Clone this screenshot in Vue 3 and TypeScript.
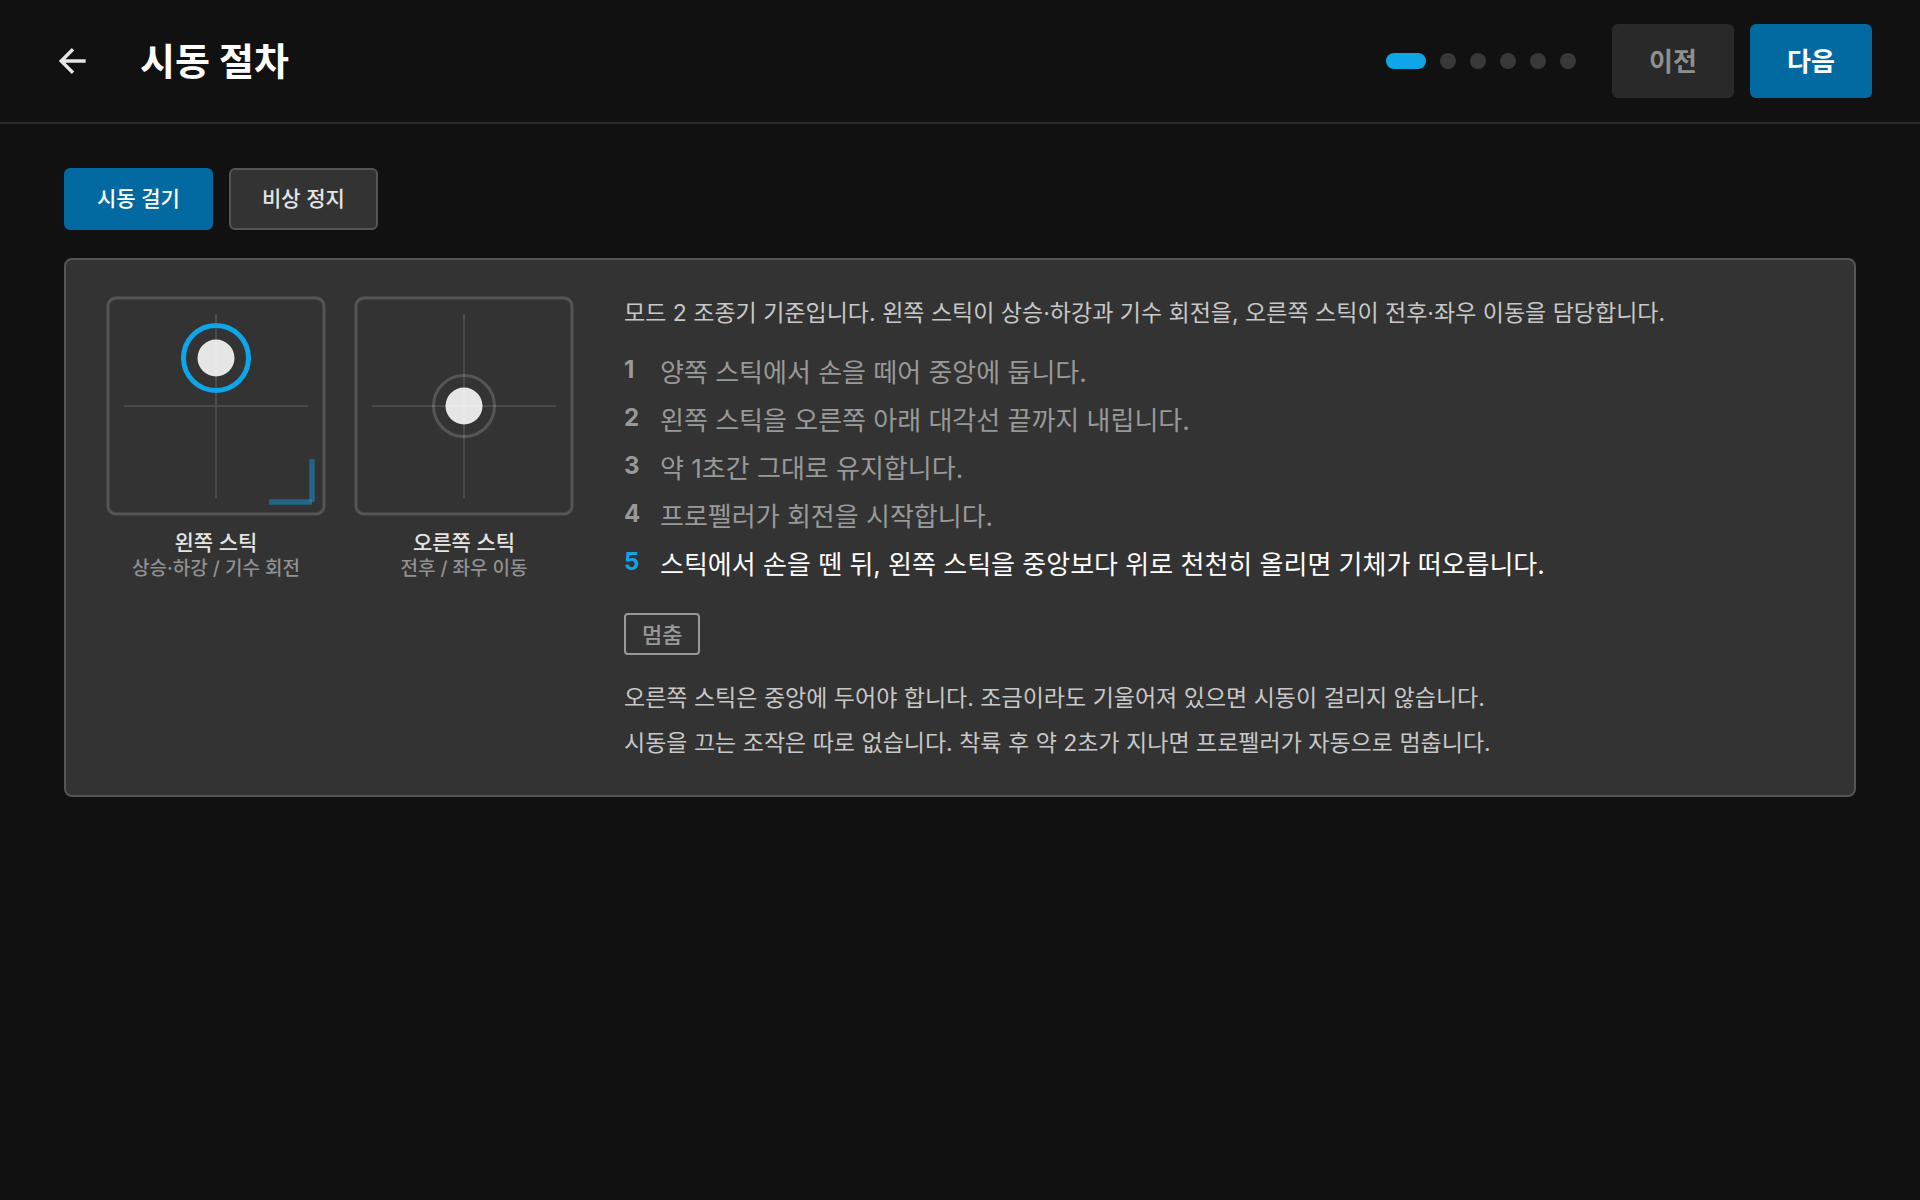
<script setup lang="ts">
import { ref } from 'vue'

interface Stick {
  id: string
  name: string
  role: string
  knobY: number
  active: boolean
}

const tabs = ['시동 걸기', '비상 정지']
const activeTab = ref(0)
const pageCount = 6
const page = ref(0)
const currentStep = 4

const sticks: Stick[] = [
  { id: 'left', name: '왼쪽 스틱', role: '상승·하강 / 기수 회전', knobY: 62, active: true },
  { id: 'right', name: '오른쪽 스틱', role: '전후 / 좌우 이동', knobY: 110, active: false },
]

const steps = [
  '양쪽 스틱에서 손을 떼어 중앙에 둡니다.',
  '왼쪽 스틱을 오른쪽 아래 대각선 끝까지 내립니다.',
  '약 1초간 그대로 유지합니다.',
  '프로펠러가 회전을 시작합니다.',
  '스틱에서 손을 뗀 뒤, 왼쪽 스틱을 중앙보다 위로 천천히 올리면 기체가 떠오릅니다.',
]
</script>

<template>
  <div class="app">
    <header class="topbar">
      <button class="back" type="button" aria-label="뒤로">
        <svg width="40" height="40" viewBox="0 0 40 40" fill="none" stroke="currentColor" stroke-width="3.4">
          <path d="M33.700 20H9M21 8.200L9.200 20L21 31.800" />
        </svg>
      </button>
      <h1>시동 절차</h1>
      <div class="dots">
        <span v-for="n in pageCount" :key="n" class="dot" :class="{ on: n - 1 === page }"></span>
      </div>
      <nav class="pager">
        <button type="button" class="nav-btn" disabled>이전</button>
        <button type="button" class="nav-btn primary">다음</button>
      </nav>
    </header>

    <main>
      <div class="tabs">
        <button
          v-for="(tab, i) in tabs"
          :key="tab"
          type="button"
          class="tab"
          :class="{ on: i === activeTab }"
          @click="activeTab = i"
        >{{ tab }}</button>
      </div>

      <section class="card">
        <div class="sticks">
          <figure v-for="s in sticks" :key="s.id">
            <svg width="220" height="220" viewBox="0 0 220 220" fill="none">
              <rect x="2" y="2" width="216" height="216" rx="8" stroke="#555" stroke-width="3" />
              <path d="M110 18V202M18 110H202" stroke="#4a4a4a" stroke-width="2" />
              <g v-if="s.active" stroke="#0ea5e9" stroke-opacity="0.45" stroke-width="5.500">
                <path d="M206 163V206" />
                <path d="M163 206H206" />
              </g>
              <circle v-if="s.active" cx="110" :cy="s.knobY" r="32.500" stroke="#0ea5e9" stroke-width="5" />
              <circle v-else cx="110" :cy="s.knobY" r="30.500" stroke="#fff" stroke-opacity="0.17" stroke-width="3" />
              <circle cx="110" :cy="s.knobY" r="18.500" fill="#fff" fill-opacity="0.88" />
            </svg>
            <figcaption>
              <span class="name">{{ s.name }}</span>
              <span class="role">{{ s.role }}</span>
            </figcaption>
          </figure>
        </div>

        <div class="guide">
          <p class="intro">모드 2 조종기 기준입니다. 왼쪽 스틱이 상승·하강과 기수 회전을, 오른쪽 스틱이 전후·좌우 이동을 담당합니다.</p>
          <ol>
            <li v-for="(step, i) in steps" :key="i" :class="{ on: i === currentStep }">
              <span class="num">{{ i + 1 }}</span>
              <span>{{ step }}</span>
            </li>
          </ol>
          <button type="button" class="stop">멈춤</button>
          <p class="note">오른쪽 스틱은 중앙에 두어야 합니다. 조금이라도 기울어져 있으면 시동이 걸리지 않습니다.</p>
          <p class="note">시동을 끄는 조작은 따로 없습니다. 착륙 후 약 2초가 지나면 프로펠러가 자동으로 멈춥니다.</p>
        </div>
      </section>
    </main>
  </div>
</template>

<style>
body {
  margin: 0;
  background: #111;
}
</style>

<style scoped>
.app {
  min-height: 100vh;
  background: #111;
  color: #fff;
  font-family: Inter, "Noto Sans CJK KR", sans-serif;
}

button {
  box-sizing: border-box;
  font: inherit;
  cursor: pointer;
}

h1,
p,
ol,
figure {
  margin: 0;
  padding: 0;
}

.topbar {
  display: flex;
  align-items: center;
  padding: 24px 48px;
  border-bottom: 2px solid #2b2b2b;
}

.back {
  display: flex;
  padding: 4px;
  border: 0;
  background: none;
  color: #e5e5e5;
}

h1 {
  margin-left: 44px;
  font-size: 38px;
  line-height: 60px;
  font-weight: 700;
}

.dots {
  display: flex;
  gap: 14px;
  margin-left: auto;
}

.dot {
  width: 16px;
  height: 16px;
  border-radius: 8px;
  background: #383838;
}

.dot.on {
  width: 40px;
  background: #0ea5e9;
}

.pager {
  display: flex;
  gap: 16px;
  margin-left: 36px;
}

.nav-btn {
  min-width: 122px;
  height: 74px;
  padding: 0 32px 4px;
  border: 0;
  border-radius: 6px;
  background: #292929;
  color: #8f8f8f;
  font-size: 26px;
  font-weight: 600;
}

.nav-btn.primary {
  background: #0369a1;
  color: #fff;
}

main {
  padding: 44px 64px;
}

.tabs {
  display: flex;
  gap: 16px;
}

.tab {
  height: 62px;
  padding: 0 31px 4px;
  border: 2px solid #555;
  border-radius: 6px;
  background: #333;
  color: #e5e5e5;
  font-size: 21px;
  font-weight: 500;
}

.tab.on {
  border-color: #0369a1;
  background: #0369a1;
  color: #fff;
}

.card {
  display: flex;
  gap: 50px;
  margin-top: 28px;
  padding: 36px 40px 35px;
  border: 2px solid #555;
  border-radius: 8px;
  background: #333;
}

.sticks {
  display: flex;
  flex: none;
  gap: 28px;
}

figure svg {
  display: block;
}

figcaption {
  display: flex;
  flex-direction: column;
  align-items: center;
  margin-top: 14px;
  white-space: nowrap;
}

.name {
  color: #e5e5e5;
  font-size: 21px;
  line-height: 26px;
  font-weight: 500;
}

.role {
  color: #919191;
  font-size: 19px;
  line-height: 26px;
  font-weight: 500;
}

.guide {
  flex: 1;
}

.intro,
.note {
  color: #c8c8c8;
  font-size: 23px;
  line-height: 34px;
}

ol {
  display: flex;
  flex-direction: column;
  gap: 8px;
  margin: 23px 0 28px;
  list-style: none;
}

li {
  display: flex;
  color: #999;
  font-size: 26px;
  line-height: 40px;
}

li.on {
  color: #fff;
}

.num {
  width: 36px;
  font-size: 24px;
  line-height: 34px;
  font-weight: 700;
}

li.on .num {
  color: #0ea5e9;
}

.stop {
  display: block;
  height: 42px;
  padding: 0 16px 3px;
  border: 2px solid #999;
  border-radius: 4px;
  background: none;
  color: #999;
  font-size: 22px;
  font-weight: 500;
}

.note {
  margin-top: 11px;
}

.stop + .note {
  margin-top: 26px;
}
</style>
